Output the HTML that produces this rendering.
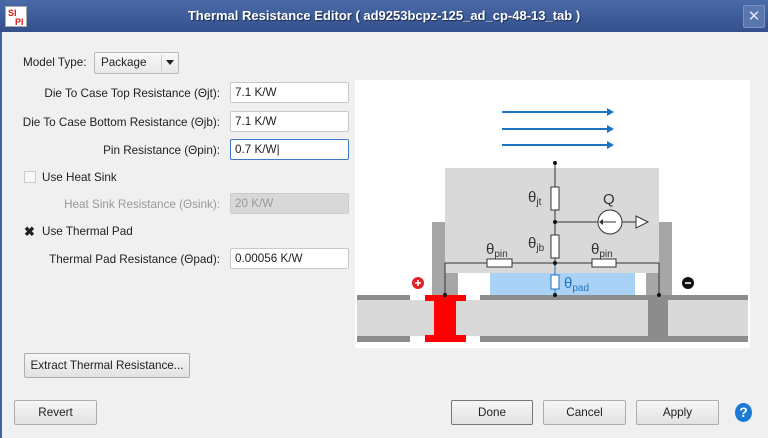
<!DOCTYPE html>
<html><head><style>
*{box-sizing:border-box;margin:0;padding:0}
body{width:768px;height:438px;overflow:hidden;background:#f0f0f0;font-family:"Liberation Sans",sans-serif;font-size:11.7px;color:#222;position:relative}
.abs{position:absolute}
.title{left:0;top:0;width:768px;height:32px;background:linear-gradient(#4a6aa8,#34508c);color:#fff;font-weight:bold;font-size:13px;text-align:center;line-height:31px;text-shadow:1px 1px 1px #1a2a50}
.lbl{position:absolute;right:548px;text-align:right;white-space:nowrap}
.fld{position:absolute;left:230px;width:119px;height:21px;background:#fff;border:1px solid #c8c8c8;border-radius:2px;padding-left:4px;line-height:19px}
.btn{position:absolute;height:25px;border:1px solid #adadad;border-radius:2px;background:linear-gradient(#f6f6f6,#e2e2e2);text-align:center;line-height:23px}
</style></head><body>
<div class="abs" style="left:0;top:0;width:2px;height:438px;background:#3d64a8"></div>
<div class="abs title">Thermal Resistance Editor ( ad9253bcpz-125_ad_cp-48-13_tab )</div>
<div class="abs" style="left:5px;top:6px;width:22px;height:21px;background:#fff;border:1px solid #aaa;font-size:9px;font-weight:bold;color:#d02020;line-height:9px;padding:2px 0 0 2px">SI<br><span style="margin-left:7px">PI</span></div>
<div class="abs" style="left:743px;top:5px;width:22px;height:23px;background:#5a76ae;border:1px solid #7a90c0;border-radius:2px;color:#dfe6f5;text-align:center;line-height:21px;font-size:15px">✕</div>

<div class="abs" style="left:23px;top:56px">Model Type:</div>
<div class="abs" style="left:94px;top:52px;width:85px;height:22px;border:1px solid #bbb;border-radius:2px;background:linear-gradient(#f8f8f8,#e8e8e8);padding-left:6px;line-height:20px">Package<div class="abs" style="left:66px;top:2px;width:1px;height:16px;background:#ccc"></div><div class="abs" style="left:71px;top:7px;width:0;height:0;border-left:4px solid transparent;border-right:4px solid transparent;border-top:5px solid #222"></div></div>

<div class="lbl" style="top:87px">Die To Case Top Resistance (Θjt):</div><div class="fld" style="top:82px">7.1 K/W</div>
<div class="lbl" style="top:116px">Die To Case Bottom Resistance (Θjb):</div><div class="fld" style="top:111px">7.1 K/W</div>
<div class="lbl" style="top:144px">Pin Resistance (Θpin):</div><div class="fld" style="top:139px;border:1px solid #3a78c8">0.7 K/W|</div>
<div class="abs" style="left:24px;top:171px;width:12px;height:12px;border:1px solid #ccc;background:#f8f8f8"></div>
<div class="abs" style="left:42px;top:171px">Use Heat Sink</div>
<div class="lbl" style="top:198px;color:#999">Heat Sink Resistance (Θsink):</div><div class="fld" style="top:193px;background:#d8d8d8;color:#999;border-color:#ccc">20 K/W</div>
<div class="abs" style="left:24px;top:224px;font-size:13px;font-weight:bold">✖</div>
<div class="abs" style="left:42px;top:225px">Use Thermal Pad</div>
<div class="lbl" style="top:253px">Thermal Pad Resistance (Θpad):</div><div class="fld" style="top:248px">0.00056 K/W</div>

<svg class="abs" style="left:355px;top:80px" width="395" height="268" viewBox="355 80 395 268" font-family="Liberation Sans,sans-serif">
<rect x="355" y="80" width="395" height="268" fill="#fff"/>
<g stroke="#1e74c0" stroke-width="2" fill="#1e74c0">
<line x1="502" y1="112" x2="608" y2="112"/><path d="M607 108L614 112L607 116Z" stroke="none"/>
<line x1="502" y1="129" x2="608" y2="129"/><path d="M607 125L614 129L607 133Z" stroke="none"/>
<line x1="502" y1="145" x2="608" y2="145"/><path d="M607 141L614 145L607 149Z" stroke="none"/>
</g>
<rect x="445" y="168" width="214" height="105" fill="#d9d9d9"/>
<rect x="432" y="222" width="13" height="73" fill="#a6a6a6"/>
<rect x="659" y="222" width="13" height="73" fill="#a6a6a6"/>
<rect x="445" y="273" width="13" height="22" fill="#a6a6a6"/>
<rect x="646" y="273" width="13" height="22" fill="#a6a6a6"/>
<rect x="458" y="273" width="32" height="22" fill="#fff"/>
<rect x="635" y="273" width="11" height="22" fill="#fff"/>
<rect x="490" y="273" width="145" height="22" fill="#aad2f7"/>
<rect x="357" y="300" width="391" height="36" fill="#d9d9d9"/>
<rect x="357" y="295" width="53" height="5" fill="#8c8c8c"/>
<rect x="357" y="336" width="53" height="6" fill="#8c8c8c"/>
<rect x="480" y="295" width="268" height="5" fill="#8c8c8c"/>
<rect x="480" y="336" width="268" height="6" fill="#8c8c8c"/>
<rect x="648" y="295" width="20" height="47" fill="#8c8c8c"/>
<rect x="425" y="295" width="41" height="6" fill="#f00"/>
<rect x="425" y="335" width="41" height="7" fill="#f00"/>
<rect x="434" y="300" width="22" height="36" fill="#f00"/>
<circle cx="418" cy="283" r="6" fill="#e0202a"/><path d="M415 283h6M418 280v6" stroke="#fff" stroke-width="1.6"/>
<circle cx="688" cy="283" r="6" fill="#111"/><path d="M685 283h6" stroke="#fff" stroke-width="1.6"/>
<g stroke="#333" stroke-width="1" fill="#fff">
<line x1="555" y1="163" x2="555" y2="275"/>
<line x1="555" y1="222" x2="598" y2="222"/><line x1="622" y1="222" x2="636" y2="222"/>
<path d="M636 216L648 222L636 228Z"/>
<circle cx="610" cy="222" r="12"/>
<line x1="445" y1="263" x2="659" y2="263"/>
<line x1="445" y1="263" x2="445" y2="296"/><line x1="659" y1="263" x2="659" y2="296"/>
<rect x="551" y="187" width="8" height="23"/>
<rect x="551" y="235" width="8" height="23"/>
<rect x="487" y="259" width="25" height="8"/>
<rect x="592" y="259" width="24" height="8"/>
<line x1="602" y1="222" x2="616" y2="222"/>
</g>
<path d="M599 222l4-3v6z" fill="#333"/>
<line x1="555" y1="266" x2="555" y2="295" stroke="#1e74c0"/>
<rect x="551" y="275" width="8" height="14" fill="#fff" stroke="#1e74c0"/>
<g fill="#111"><circle cx="555" cy="163" r="2"/><circle cx="555" cy="222" r="2"/><circle cx="555" cy="263" r="2"/><circle cx="555" cy="295" r="2"/><circle cx="445" cy="295" r="2"/><circle cx="659" cy="295" r="2"/></g>
<g font-size="15" fill="#333">
<text x="528" y="202">θ<tspan font-size="10" dy="3">jt</tspan></text>
<text x="528" y="248">θ<tspan font-size="10" dy="3">jb</tspan></text>
<text x="486" y="254">θ<tspan font-size="10" dy="3">pin</tspan></text>
<text x="591" y="254">θ<tspan font-size="10" dy="3">pin</tspan></text>
<text x="603" y="204">Q</text>
<text x="564" y="288" fill="#1e74c0">θ<tspan font-size="10" dy="3">pad</tspan></text>
</g>
</svg>

<div class="btn" style="left:24px;top:353px;width:166px">Extract Thermal Resistance...</div>
<div class="btn" style="left:14px;top:400px;width:83px">Revert</div>
<div class="btn" style="left:451px;top:400px;width:82px;border-color:#777">Done</div>
<div class="btn" style="left:543px;top:400px;width:83px">Cancel</div>
<div class="btn" style="left:636px;top:400px;width:83px">Apply</div>
<div class="abs" style="left:735px;top:403px;width:17px;height:19px;border-radius:50%;background:#1a7ad8;color:#fff;font-weight:bold;font-size:14px;text-align:center;line-height:19px">?</div>
</body></html>
